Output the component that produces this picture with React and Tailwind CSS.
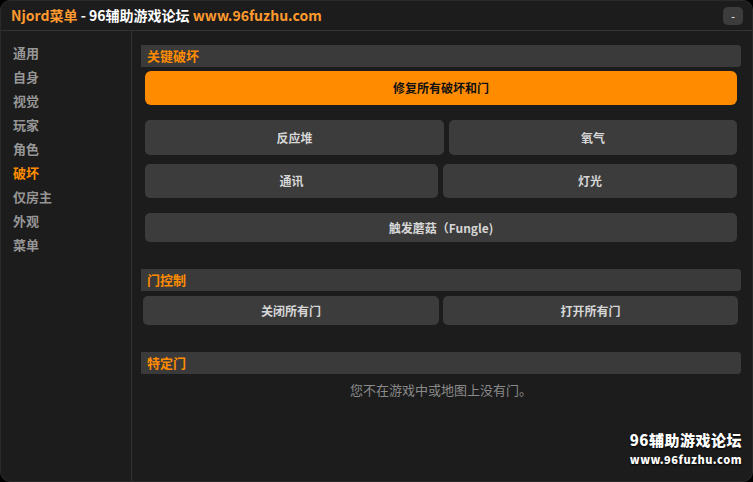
export default function App() {
  const menu = ["通用", "自身", "视觉", "玩家", "角色", "破坏", "仅房主", "外观", "菜单"];
  const font = { fontFamily: '"Noto Sans CJK SC", "Noto Sans", sans-serif' };

  const Header = ({ children }) => (
    <div className="h-[22px] bg-[#3a3a3a] rounded-r-[3px] flex items-center pl-[6px] text-[13px] font-bold text-[#ff8c00]">
      {children}
    </div>
  );

  const Btn = ({ children, className = "" }) => (
    <button className={"bg-[#3c3c3c] rounded-[5px] text-[12px] font-bold text-[#d6d6d6] flex items-center justify-center " + className}>
      {children}
    </button>
  );

  return (
    <div className="w-[753px] h-[482px] bg-black" style={font}>
      <div className="relative w-full h-full bg-[#1c1c1c] rounded-[10px] border border-[#2a2a2a] flex flex-col overflow-hidden">
        {/* title bar */}
        <div className="h-[30px] shrink-0 flex items-center justify-between pl-[10px] pr-[9px] border-b border-[#343434]">
          <div className="text-[14px] font-bold">
            <span className="text-[#ff9a2e]">Njord菜单</span>
            <span className="text-white"> - 96辅助游戏论坛 </span>
            <span className="text-[#ff9a2e]">www.96fuzhu.com</span>
          </div>
          <div className="w-[20px] h-[18px] rounded-[5px] bg-[#3c3c3c] flex items-center justify-center text-[#ddd] text-[10px] font-bold leading-none">
            -
          </div>
        </div>

        <div className="flex flex-1">
          {/* sidebar */}
          <div className="w-[131px] shrink-0 border-r border-[#343434] pt-[10px] pl-[12px] flex flex-col">
            {menu.map((m) => (
              <div
                key={m}
                className={"h-[24px] flex items-center text-[13px] font-bold " + (m === "破坏" ? "text-[#ff8c00]" : "text-[#969696]")}
              >
                {m}
              </div>
            ))}
          </div>

          {/* content */}
          <div className="flex-1 pl-[9px] pr-[11px] pt-[14px] flex flex-col">
            <Header>关键破坏</Header>
            <div className="px-[4px] flex flex-col">
              <button className="mt-[4px] h-[34px] rounded-[6px] bg-[#ff8c00] text-[12px] font-bold text-[#111]">
                修复所有破坏和门
              </button>
              <div className="mt-[15px] flex gap-[5px] h-[35px]">
                <Btn className="w-[299px]">反应堆</Btn>
                <Btn className="flex-1">氧气</Btn>
              </div>
              <div className="mt-[9px] flex gap-[5px] h-[34px]">
                <Btn className="w-[293px]">通讯</Btn>
                <Btn className="flex-1">灯光</Btn>
              </div>
              <Btn className="mt-[15px] h-[29px] w-full">触发蘑菇（Fungle)</Btn>
            </div>

            <div className="mt-[27px]">
              <Header>门控制</Header>
            </div>
            <div className="mt-[5px] pl-[2px] pr-[3px] flex gap-[4px] h-[29px]">
              <Btn className="w-[296px]">关闭所有门</Btn>
              <Btn className="flex-1">打开所有门</Btn>
            </div>

            <div className="mt-[27px]">
              <Header>特定门</Header>
            </div>
            <div className="mt-[6px] text-center text-[13px] text-[#8a8a8a]">您不在游戏中或地图上没有门。</div>
          </div>
        </div>

        {/* watermark */}
        <div className="absolute right-[10px] bottom-[16px] flex flex-col items-end text-white font-black leading-none" style={{ textShadow: "0 1px 2px #000" }}>
          <div className="text-[15px] tracking-[0.5px]">96辅助游戏论坛</div>
          <div className="mt-[7px] text-[11px] tracking-[0.5px]">www.96fuzhu.com</div>
        </div>
      </div>
    </div>
  );
}
